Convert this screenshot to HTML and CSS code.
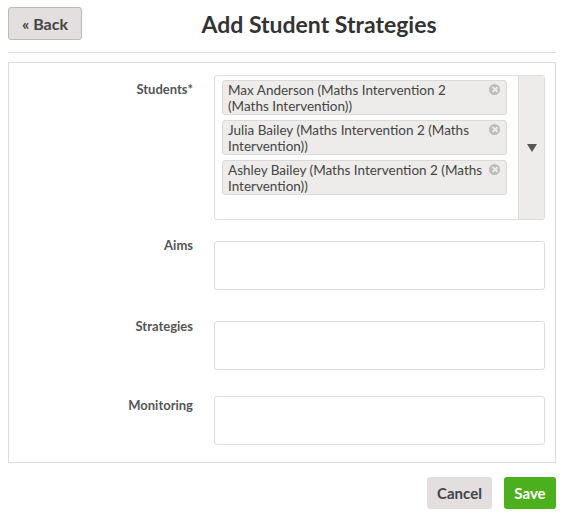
FILE: index.html
```html
<!DOCTYPE html>
<html lang="en">
<head>
    <meta charset="UTF-8">
    <title>Add Student Strategies</title>
    <link rel="stylesheet" href="styles.css">
</head>
<body>
    <div class="page-header">
        <button class="btn btn-back">&laquo; Back</button>
        <h1>Add Student Strategies</h1>
    </div>

    <form class="panel">
        <div class="form-row row-students">
            <label>Students*</label>
            <div class="multi-select">
                <div class="tags">
                    <div class="tag">
                        <span>Max Anderson (Maths Intervention 2 (Maths Intervention))</span>
                        <span class="tag-remove"></span>
                    </div>
                    <div class="tag">
                        <span>Julia Bailey (Maths Intervention 2 (Maths Intervention))</span>
                        <span class="tag-remove"></span>
                    </div>
                    <div class="tag">
                        <span>Ashley Bailey (Maths Intervention 2 (Maths Intervention))</span>
                        <span class="tag-remove"></span>
                    </div>
                </div>
                <div class="arrow"><span class="caret"></span></div>
            </div>
        </div>

        <div class="form-row row-aims">
            <label>Aims</label>
            <textarea></textarea>
        </div>

        <div class="form-row row-strategies">
            <label>Strategies</label>
            <textarea></textarea>
        </div>

        <div class="form-row row-monitoring">
            <label>Monitoring</label>
            <textarea></textarea>
        </div>
    </form>

    <div class="actions">
        <button class="btn btn-cancel">Cancel</button>
        <button class="btn btn-save">Save</button>
    </div>
</body>
</html>
```

FILE: styles.css
```css
body {
    font-family: Lato, "Noto Sans", sans-serif;
    color: #444;
    background: #fff;
    margin: 7px 8px 8px;
}

.page-header {
    display: flex;
    align-items: center;
    padding-bottom: 12px;
    border-bottom: 1px solid #ddd;
}

.page-header h1 {
    flex: 1;
    margin: 0;
    text-align: center;
    font-size: 23px;
    font-weight: 700;
    color: #333;
}

.btn {
    font-family: inherit;
    font-weight: 700;
    border-radius: 3px;
    cursor: pointer;
}

.btn-back {
    width: 74px;
    height: 33px;
    padding: 0;
    font-size: 16px;
    color: #444;
    background: #e2dfde;
    border: 1px solid #bcb9b9;
}

.panel {
    margin-top: 9px;
    border: 1px solid #ddd;
    padding: 12px 10px 17px;
}

.form-row {
    display: grid;
    grid-template-columns: 174px 1fr;
    column-gap: 21px;
    align-items: start;
}

.form-row label {
    text-align: right;
    font-size: 13px;
    line-height: 16px;
    font-weight: 700;
    color: #555;
}

.row-students label { padding-top: 6px; }
.row-aims label { margin-top: -4px; }
.row-strategies label { margin-top: -3px; }
.row-monitoring label { margin-top: 1px; }

.row-aims { margin-top: 21px; }
.row-strategies { margin-top: 31px; }
.row-monitoring { margin-top: 26px; }

textarea {
    display: block;
    box-sizing: border-box;
    width: 100%;
    height: 49px;
    border: 1px solid #ddd;
    border-radius: 3px;
    resize: none;
}

.multi-select {
    display: flex;
    height: 145px;
    box-sizing: border-box;
    border: 1px solid #ddd;
    border-radius: 3px;
}

.tags {
    flex: 1;
    padding: 4px 11px 0 7px;
    display: flex;
    flex-direction: column;
    gap: 5px;
}

.tag {
    display: flex;
    align-items: flex-start;
    justify-content: space-between;
    height: 35px;
    box-sizing: border-box;
    padding: 1px 6px 0 5px;
    background: #eeeceb;
    border: 1px solid #dcdad9;
    border-radius: 3px;
    font-size: 13.5px;
    line-height: 16px;
    color: #444;
}

.tag span:first-child {
    max-width: 255px;
}

.tag-remove {
    position: relative;
    flex: none;
    width: 11px;
    height: 11px;
    margin-top: 2px;
    border-radius: 50%;
    background: #bdbbba;
}

.tag-remove::before,
.tag-remove::after {
    content: "";
    position: absolute;
    left: 5px;
    top: 2px;
    width: 1.5px;
    height: 7px;
    background: #eeeceb;
    transform: rotate(45deg);
}

.tag-remove::after {
    transform: rotate(-45deg);
}

.arrow {
    width: 25px;
    border-left: 1px solid #ddd;
    background: #eeeceb;
    display: flex;
    align-items: center;
    justify-content: center;
}

.caret {
    width: 0;
    height: 0;
    margin-top: 1px;
    border-left: 5px solid transparent;
    border-right: 5px solid transparent;
    border-top: 8px solid #555;
}

.actions {
    display: flex;
    justify-content: flex-end;
    gap: 12px;
    margin-top: 14px;
}

.btn-cancel,
.btn-save {
    height: 32px;
    font-size: 15px;
    border: none;
}

.btn-cancel {
    width: 65px;
    background: #e2dfde;
    color: #444;
}

.btn-save {
    width: 52px;
    background: #4cb01e;
    color: #fff;
}
```
